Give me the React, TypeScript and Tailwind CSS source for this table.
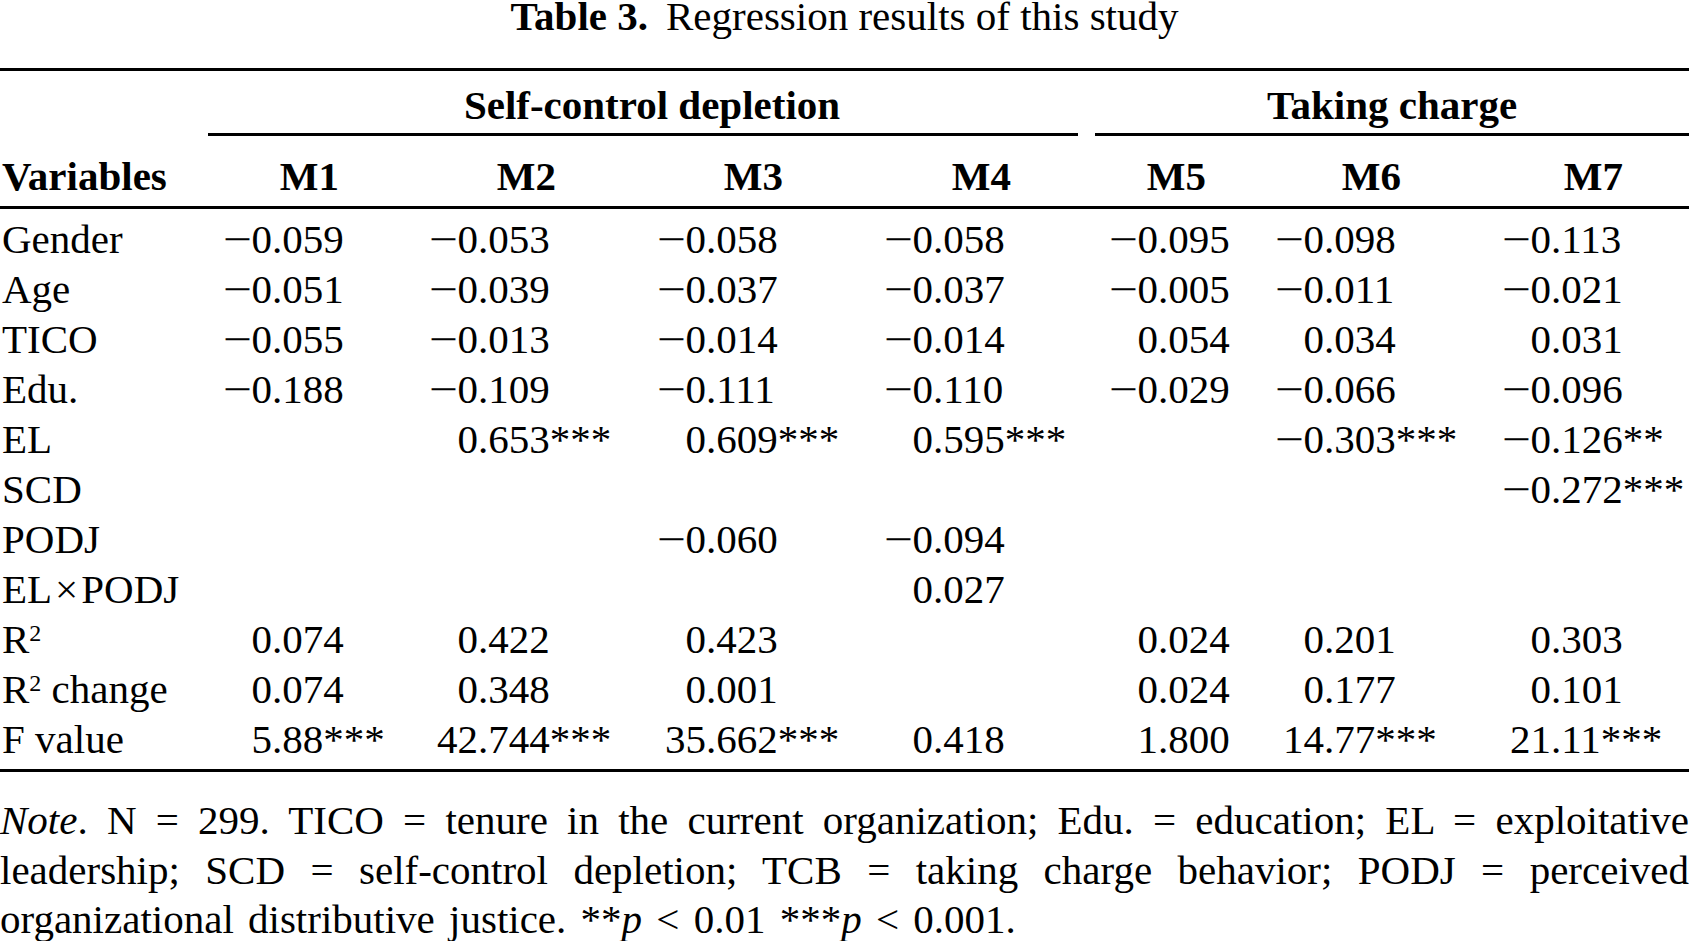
const cols = [
  { box: "w-[64px]", head: "pr-[77px]" },
  { box: "w-[62px]", head: "pr-[84px]" },
  { box: "w-[66px]", head: "pr-[85px]" },
  { box: "w-[65px]", head: "pr-[84px]" },
  { box: "w-[63px]", head: "pr-[53px]" },
  { box: "w-[65px]", head: "pr-[66px]" },
  { box: "w-[84px]", head: "pr-[66px]" },
];

const rows: { label: React.ReactNode; values: string[] }[] = [
  { label: "Gender", values: ["−0.059", "−0.053", "−0.058", "−0.058", "−0.095", "−0.098", "−0.113"] },
  { label: "Age", values: ["−0.051", "−0.039", "−0.037", "−0.037", "−0.005", "−0.011", "−0.021"] },
  { label: "TICO", values: ["−0.055", "−0.013", "−0.014", "−0.014", "0.054", "0.034", "0.031"] },
  { label: "Edu.", values: ["−0.188", "−0.109", "−0.111", "−0.110", "−0.029", "−0.066", "−0.096"] },
  { label: "EL", values: ["", "0.653***", "0.609***", "0.595***", "", "−0.303***", "−0.126**"] },
  { label: "SCD", values: ["", "", "", "", "", "", "−0.272***"] },
  { label: "PODJ", values: ["", "", "−0.060", "−0.094", "", "", ""] },
  {
    label: (
      <>
        EL<span className="mx-[3px]">×</span>PODJ
      </>
    ),
    values: ["", "", "", "0.027", "", "", ""],
  },
  {
    label: (
      <>
        R<sup className="text-[24px]">2</sup>
      </>
    ),
    values: ["0.074", "0.422", "0.423", "", "0.024", "0.201", "0.303"],
  },
  {
    label: (
      <>
        R<sup className="text-[24px]">2</sup> change
      </>
    ),
    values: ["0.074", "0.348", "0.001", "", "0.024", "0.177", "0.101"],
  },
  { label: "F value", values: ["5.88***", "42.744***", "35.662***", "0.418", "1.800", "14.77***", "21.11***"] },
];

function Minus() {
  return <span className="inline-block w-[29px] scale-x-125 text-center">−</span>;
}

function Cell({ value, box }: { value: string; box: string }) {
  if (!value) return <div className="h-[50px]" />;
  const neg = value.startsWith("−");
  const body = neg ? value.slice(1) : value;
  const dot = body.indexOf(".");
  const whole = body.slice(0, dot);
  const rest = body.slice(dot);
  return (
    <div className="flex h-[50px] whitespace-nowrap">
      <span className={`${box} shrink-0 text-right`}>
        {neg && <Minus />}
        {whole}
      </span>
      <span>{rest}</span>
    </div>
  );
}

export default function App() {
  return (
    <div className="w-[1689px] bg-white text-[41px] leading-[50px] text-black font-['Liberation_Serif','Times_New_Roman',serif]">
      <div className="h-[32px] text-center leading-[32px]">
        <span className="font-bold">Table 3.</span>
        <span className="ml-[18px]">Regression results of this study</span>
      </div>

      <div className="mt-[36px] border-t-[3px] border-black">
        <div className="flex gap-[17px] pt-[9px] pl-[208px] font-bold">
          <div className="w-[870px] border-b-[3px] border-black pb-[3px] pl-[18px] text-center">Self-control depletion</div>
          <div className="flex-1 border-b-[3px] border-black pb-[3px] text-center">Taking charge</div>
        </div>

        <div className="mt-[15px] grid grid-cols-[208px_208px_224px_228px_227px_164px_208px_222px] border-b-[3px] border-black pb-[5px] font-bold">
          <div className="pl-[2px]">Variables</div>
          {cols.map((c, i) => (
            <div key={i} className={`flex justify-end ${c.head}`}>
              M{i + 1}
            </div>
          ))}
        </div>

        <div className="grid grid-cols-[208px_208px_224px_228px_227px_164px_208px_222px] border-b-[3px] border-black pt-[5px] pb-[5px]">
          {rows.map((r, ri) => (
            <div key={ri} className="contents">
              <div className="h-[50px] pl-[2px] whitespace-nowrap">{r.label}</div>
              {r.values.map((v, ci) => (
                <Cell key={ci} value={v} box={cols[ci].box} />
              ))}
            </div>
          ))}
        </div>
      </div>

      <div className="mt-[24px] leading-[49.5px]">
        <div className="text-justify [text-align-last:justify]">
          <i>Note</i>. N = 299. TICO = tenure in the current organization; Edu. = education; EL = exploitative
        </div>
        <div className="text-justify [text-align-last:justify]">
          leadership; SCD = self-control depletion; TCB = taking charge behavior; PODJ = perceived
        </div>
        <div className="[word-spacing:4px]">
          organizational distributive justice. **<i>p</i> &lt; 0.01 ***<i>p</i> &lt; 0.001.
        </div>
      </div>
    </div>
  );
}
